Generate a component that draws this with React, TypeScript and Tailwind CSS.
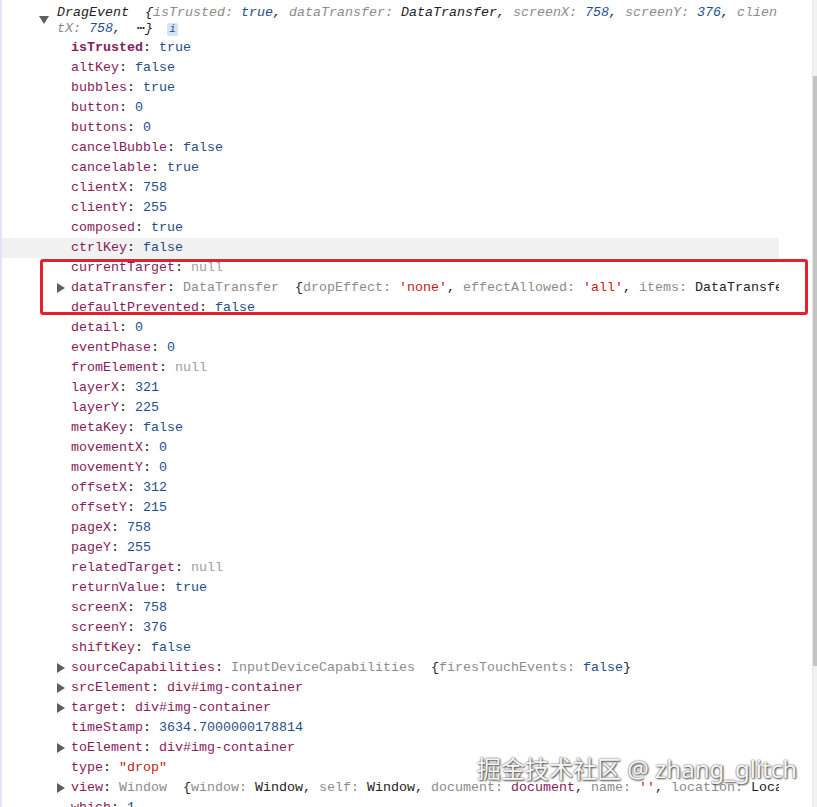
import React from 'react';

type Part = { t: string; c: string; i?: boolean };

const KEY = 'text-[#881b5b]';
const NUM = 'text-[#1f4e8c]';
const NUL = 'text-[#a0a0a0]';
const GRY = 'text-[#8c8c8c]';
const STR = 'text-[#c41a16]';
const BLK = 'text-[#222222]';

interface Row {
  k: string;
  v: Part[];
  open?: boolean;
  bold?: boolean;
  hover?: boolean;
}

const n = (t: string): Part[] => [{ t, c: NUM }];

const rows: Row[] = [
  { k: 'isTrusted', v: n('true'), bold: true },
  { k: 'altKey', v: n('false') },
  { k: 'bubbles', v: n('true') },
  { k: 'button', v: n('0') },
  { k: 'buttons', v: n('0') },
  { k: 'cancelBubble', v: n('false') },
  { k: 'cancelable', v: n('true') },
  { k: 'clientX', v: n('758') },
  { k: 'clientY', v: n('255') },
  { k: 'composed', v: n('true') },
  { k: 'ctrlKey', v: n('false'), hover: true },
  { k: 'currentTarget', v: [{ t: 'null', c: NUL }] },
  {
    k: 'dataTransfer',
    open: true,
    v: [
      { t: 'DataTransfer', c: GRY },
      { t: '  {', c: BLK },
      { t: 'dropEffect: ', c: GRY },
      { t: "'none'", c: STR },
      { t: ', ', c: BLK },
      { t: 'effectAllowed: ', c: GRY },
      { t: "'all'", c: STR },
      { t: ', ', c: BLK },
      { t: 'items: ', c: GRY },
      { t: 'DataTransferItemList', c: BLK },
    ],
  },
  { k: 'defaultPrevented', v: n('false') },
  { k: 'detail', v: n('0') },
  { k: 'eventPhase', v: n('0') },
  { k: 'fromElement', v: [{ t: 'null', c: NUL }] },
  { k: 'layerX', v: n('321') },
  { k: 'layerY', v: n('225') },
  { k: 'metaKey', v: n('false') },
  { k: 'movementX', v: n('0') },
  { k: 'movementY', v: n('0') },
  { k: 'offsetX', v: n('312') },
  { k: 'offsetY', v: n('215') },
  { k: 'pageX', v: n('758') },
  { k: 'pageY', v: n('255') },
  { k: 'relatedTarget', v: [{ t: 'null', c: NUL }] },
  { k: 'returnValue', v: n('true') },
  { k: 'screenX', v: n('758') },
  { k: 'screenY', v: n('376') },
  { k: 'shiftKey', v: n('false') },
  {
    k: 'sourceCapabilities',
    open: true,
    v: [
      { t: 'InputDeviceCapabilities', c: GRY },
      { t: '  {', c: BLK },
      { t: 'firesTouchEvents: ', c: GRY },
      { t: 'false', c: NUM },
      { t: '}', c: BLK },
    ],
  },
  { k: 'srcElement', open: true, v: [{ t: 'div#img-container', c: KEY }] },
  { k: 'target', open: true, v: [{ t: 'div#img-container', c: KEY }] },
  { k: 'timeStamp', v: n('3634.7000000178814') },
  { k: 'toElement', open: true, v: [{ t: 'div#img-container', c: KEY }] },
  { k: 'type', v: [{ t: '"drop"', c: STR }] },
  {
    k: 'view',
    open: true,
    v: [
      { t: 'Window', c: GRY },
      { t: '  {', c: BLK },
      { t: 'window: ', c: GRY },
      { t: 'Window', c: BLK },
      { t: ', ', c: BLK },
      { t: 'self: ', c: GRY },
      { t: 'Window', c: BLK },
      { t: ', ', c: BLK },
      { t: 'document: ', c: GRY },
      { t: 'document', c: KEY },
      { t: ', ', c: BLK },
      { t: 'name: ', c: GRY },
      { t: "''", c: STR },
      { t: ', ', c: BLK },
      { t: 'location: ', c: GRY },
      { t: 'Location', c: BLK },
    ],
  },
  { k: 'which', v: n('1') },
];

const Arrow = ({ down }: { down?: boolean }) =>
  down ? (
    <svg width="10" height="8" viewBox="0 0 10 8" className="block">
      <path d="M0 0 L10 0 L5 8 Z" fill="#5f5f5f" />
    </svg>
  ) : (
    <svg width="8" height="10" viewBox="0 0 8 10" className="block">
      <path d="M0 0 L8 5 L0 10 Z" fill="#5f5f5f" />
    </svg>
  );

const headerLine1: Part[] = [
  { t: 'DragEvent', c: BLK },
  { t: '  {', c: BLK },
  { t: 'isTrusted: ', c: GRY },
  { t: 'true', c: NUM },
  { t: ', ', c: BLK },
  { t: 'dataTransfer: ', c: GRY },
  { t: 'DataTransfer', c: BLK },
  { t: ', ', c: BLK },
  { t: 'screenX: ', c: GRY },
  { t: '758', c: NUM },
  { t: ', ', c: BLK },
  { t: 'screenY: ', c: GRY },
  { t: '376', c: NUM },
  { t: ', ', c: BLK },
  { t: 'clien', c: GRY },
];

const headerLine2: Part[] = [
  { t: 'tX: ', c: GRY },
  { t: '758', c: NUM },
  { t: ',  ', c: BLK },
  { t: '⋯', c: BLK },
  { t: '}', c: BLK },
];

const Parts = ({ parts }: { parts: Part[] }) => (
  <>
    {parts.map((p, i) => (
      <span key={i} className={p.c}>
        {p.t}
      </span>
    ))}
  </>
);

export default function App() {
  return (
    <div
      className="relative w-[817px] h-[807px] overflow-hidden bg-white flex text-[13.33px]"
      style={{ fontFamily: '"Liberation Mono", "DejaVu Sans Mono", monospace' }}
    >
      <div className="w-[2px] shrink-0 bg-[#e4e4f6]" />
      <div className="w-[777px] shrink-0 overflow-hidden whitespace-pre">
        {/* header */}
        <div className="flex pt-[5px] mb-[1px] leading-[16px]">
          <div className="w-[55px] shrink-0 flex justify-end pr-[8px] pt-[11px]">
            <Arrow down />
          </div>
          <div className="italic">
            <div>
              <Parts parts={headerLine1} />
            </div>
            <div className="flex items-center">
              <Parts parts={headerLine2} />
              <span className="ml-[14px] inline-flex h-[13px] w-[11px] items-center justify-center rounded-[2px] bg-[#d5e3f7] text-[11px] text-[#1f4e8c]">
                i
              </span>
            </div>
          </div>
        </div>
        {rows.map((r) => (
          <div
            key={r.k}
            className={`flex h-[20px] items-center leading-[20px] ${r.hover ? 'bg-[#f1f1f1]' : ''}`}
          >
            <div className="w-[69px] shrink-0 flex justify-end pr-[6px]">
              {r.open && <Arrow />}
            </div>
            <span className={`${KEY} ${r.bold ? 'font-bold' : ''}`}>{r.k}</span>
            <span className={BLK}>: </span>
            <Parts parts={r.v} />
          </div>
        ))}
      </div>
      <div className="flex-1" />
      <div className="w-[5px] shrink-0 bg-[#f1f1f1] flex flex-col border-l border-[#e6e6e6]">
        <div className="h-[76px]" />
        <div className="h-[590px] bg-[#c4c4c4]" />
      </div>

      {/* red annotation box */}
      <div className="absolute left-[40px] top-[259px] w-[768px] h-[56px] border-[3px] border-[#e5212b] rounded-[3px]" />

      {/* watermark */}
      <div
        className="absolute left-[477px] top-[752px] text-[24px] leading-[34px] text-[#f7f7f7] [text-shadow:0_0_2px_#444,1px_1px_2px_#555]"
        style={{ fontFamily: '"Noto Sans", "Noto Sans CJK SC", sans-serif' }}
      >
        掘金技术社区 @ zhang_glitch
      </div>
    </div>
  );
}
